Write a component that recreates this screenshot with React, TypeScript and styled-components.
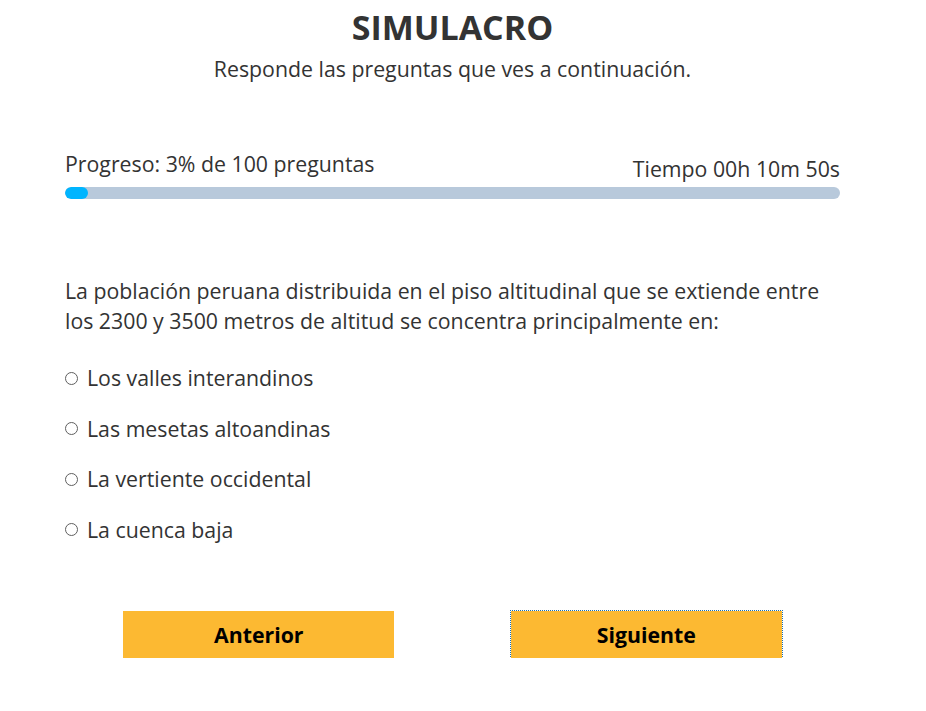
import React from "react";
import styled, { createGlobalStyle } from "styled-components";

const Global = createGlobalStyle`
  html, body { margin: 0; padding: 0; background: #fff; }
  body { font-family: "Open Sans", "Noto Sans", sans-serif; color: #333; }
`;

const Page = styled.main`
  width: 775px;
  margin-left: 65px;
  padding-top: 4px;
`;

const Title = styled.h1`
  margin: 0;
  text-align: center;
  font-size: 34px;
  line-height: 46px;
  font-weight: 700;
  color: #333;
`;

const Subtitle = styled.p`
  margin: 4px 0 0;
  text-align: center;
  font-size: 21.3px;
  line-height: 30px;
`;

const ProgressHead = styled.div`
  margin-top: 65px;
  display: flex;
  justify-content: space-between;
  align-items: flex-end;
  font-size: 21.3px;
`;

const ProgressLabel = styled.span`
  line-height: 30px;
  margin-bottom: 5px;
`;

const Timer = styled.span`
  line-height: 30px;
`;

const Track = styled.div`
  margin-top: 3px;
  height: 12px;
  border-radius: 6px;
  background: #b8c9db;
  overflow: hidden;
`;

const Fill = styled.div`
  height: 100%;
  border-radius: 6px;
  background: #00b5ff;
`;

const Question = styled.p`
  margin: 77px 0 0;
  font-size: 21.3px;
  line-height: 30px;
  max-width: 770px;
`;

const Options = styled.div`
  margin-top: 27px;
  display: flex;
  flex-direction: column;
  gap: 20.5px;
`;

const Option = styled.label`
  display: flex;
  align-items: center;
  font-size: 21.3px;
  line-height: 30px;
`;

const Radio = styled.input`
  appearance: none;
  width: 13px;
  height: 13px;
  margin: 0 9px 0 0;
  border: 1px solid #5f5f5f;
  border-radius: 50%;
  background: #fff;
`;

const Buttons = styled.div`
  margin-top: 66px;
  display: grid;
  grid-template-columns: 1fr 1fr;
  justify-items: center;
`;

const Button = styled.button<{ $focused?: boolean }>`
  width: 271px;
  height: 47px;
  border: none;
  background: #fcb932;
  color: #000;
  font-family: "Open Sans", "Noto Sans", sans-serif;
  font-size: 21.3px;
  font-weight: 700;
  outline: ${(p) => (p.$focused ? "1px dotted #1a6fb0" : "none")};
  outline-offset: 0;
`;

const options = [
  "Los valles interandinos",
  "Las mesetas altoandinas",
  "La vertiente occidental",
  "La cuenca baja",
];

export default function App() {
  const progress = 3;
  return (
    <>
      <Global />
      <Page>
        <Title>SIMULACRO</Title>
        <Subtitle>Responde las preguntas que ves a continuación.</Subtitle>
        <ProgressHead>
          <ProgressLabel>Progreso: {progress}% de 100 preguntas</ProgressLabel>
          <Timer>Tiempo 00h 10m 50s</Timer>
        </ProgressHead>
        <Track>
          <Fill style={{ width: `${progress}%` }} />
        </Track>
        <Question>
          La población peruana distribuida en el piso altitudinal que se extiende entre
          los 2300 y 3500 metros de altitud se concentra principalmente en:
        </Question>
        <Options>
          {options.map((o) => (
            <Option key={o}>
              <Radio type="radio" name="q" />
              {o}
            </Option>
          ))}
        </Options>
        <Buttons>
          <Button>Anterior</Button>
          <Button $focused>Siguiente</Button>
        </Buttons>
      </Page>
    </>
  );
}
